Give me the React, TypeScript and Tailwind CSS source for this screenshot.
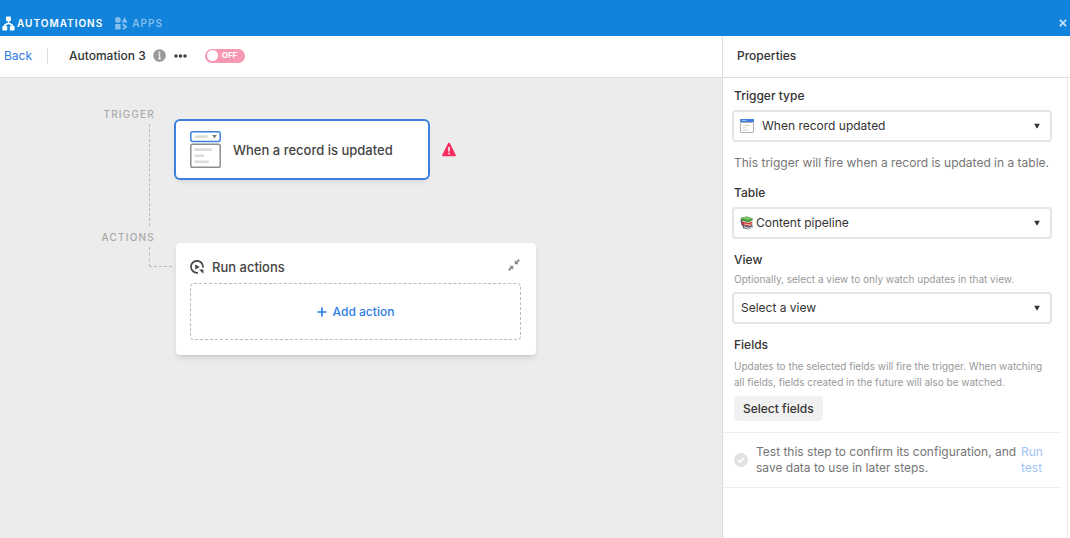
import type { ReactNode } from "react";

function AutomationsIcon() {
  return (
    <svg width="13" height="15" viewBox="0 0 13 15" fill="none" aria-hidden="true">
      <rect x="4" y="0.5" width="5" height="4.5" rx="0.8" fill="#fff" />
      <path d="M6.5 4.5V7.5M2.7 11V9.2L6.5 7L10.3 9.2V11" stroke="#fff" strokeWidth="1.7" />
      <rect x="0.4" y="10" width="4.8" height="4.5" rx="0.8" fill="#fff" />
      <rect x="7.8" y="10" width="4.8" height="4.5" rx="0.8" fill="#fff" />
    </svg>
  );
}

function AppsIcon() {
  return (
    <svg width="13" height="13" viewBox="0 0 13 13" fill="currentColor" aria-hidden="true">
      <circle cx="2.9" cy="2.9" r="2.8" />
      <path d="M9.6 0.2L12.6 5.6H6.6Z" />
      <rect x="0.2" y="7" width="5.4" height="5.6" rx="0.6" />
      <path d="M7.8 7.2L11 9.7L7.8 12.3" fill="none" stroke="currentColor" strokeWidth="2" />
    </svg>
  );
}

function InfoIcon() {
  return (
    <svg width="13" height="13" viewBox="0 0 13 13" aria-hidden="true">
      <circle cx="6.5" cy="6.5" r="6.3" fill="#999" />
      <circle cx="6.4" cy="3.4" r="1" fill="#fff" />
      <path d="M5.2 5.7H6.7V9.6M5 9.7H8.2" fill="none" stroke="#fff" strokeWidth="1.1" />
    </svg>
  );
}

function RecordIcon() {
  return (
    <svg width="31" height="37" viewBox="0 0 31 37" fill="none" aria-hidden="true">
      <rect x="0.8" y="0.8" width="29.4" height="9.6" rx="1.8" fill="#fff" stroke="#3d80df" strokeWidth="1.5" />
      <path d="M6 5.6H16.5" stroke="#dcdcdc" strokeWidth="2.6" strokeLinecap="round" />
      <path d="M22.2 4H26.8L24.5 7.2Z" fill="#777" />
      <rect x="0.8" y="13.2" width="29.4" height="23" rx="1.8" fill="#fff" stroke="#8e8e8e" strokeWidth="1.5" />
      <path d="M5.2 18.6H20.8M5.2 24.7H13.2M5.2 30.8H18" stroke="#dcdcdc" strokeWidth="2.6" strokeLinecap="round" />
    </svg>
  );
}

function RecordIconSmall() {
  return (
    <svg width="14" height="14" viewBox="0 0 14 14" fill="none" aria-hidden="true">
      <rect x="0.5" y="3.5" width="13" height="10" rx="0.6" fill="#fff" stroke="#b0b0b0" />
      <rect width="14" height="3" rx="0.6" fill="#3d7fe0" />
      <path d="M2 1.4H6.5" stroke="#a9c8f5" />
      <path d="M2.5 6.5H10M2.5 8.8H6.5M2.5 11H9" stroke="#d5d5d5" />
    </svg>
  );
}

function BooksIcon() {
  return (
    <svg width="14" height="14" viewBox="0 0 14 14" aria-hidden="true">
      <path d="M0.4 4.4L2 3.8L3.2 10.4L1.8 9.8Z" fill="#5b4b8a" />
      <path d="M3 9L9 10.2L12.6 8.8V11.6L8.6 13.4L3 12.2Z" fill="#4f6076" />
      <path d="M4 10.4L9 11.8L12.6 10.6V11.4L8.8 12.9L4 11.6Z" fill="#e9e6e4" />
      <path d="M1.6 5.2L8 7L12.2 5.6V8.6L8 10.4L2.4 8.8Z" fill="#c9372f" />
      <path d="M4 7.4L8.4 8.6L12 7.2V7.8L8.4 9.4L4 8.2Z" fill="#f0d8d0" />
      <path d="M0.6 2L6.8 0.4L12.6 2.6V4.2L8 6.4L1.2 4.2Z" fill="#3f8f3c" />
      <path d="M0.6 2L6.8 0.4L12.6 2.6L8 4.4Z" fill="#74c267" />
    </svg>
  );
}

function WarningIcon() {
  return (
    <svg width="14" height="15" viewBox="0 0 14 15" role="img" aria-label="Incomplete step">
      <path d="M6.2 1C6.5 0.3 7.5 0.3 7.8 1L13.8 13C14.1 13.7 13.8 14.3 13 14.3H1C0.2 14.3 -0.1 13.7 0.2 13Z" fill="#f82b60" />
      <path d="M7 5V9.4" stroke="#fff" strokeWidth="1.6" />
      <rect x="6.2" y="10.8" width="1.6" height="1.6" fill="#fff" />
    </svg>
  );
}

function RunIcon() {
  return (
    <svg width="14" height="14" viewBox="0 0 14 14" fill="none" aria-hidden="true">
      <path d="M8 12.7A6 6 0 1 1 12.9 7.6" stroke="#444" strokeWidth="1.7" />
      <path d="M5.2 4.4L9.8 7L5.2 9.6Z" fill="#444" />
      <path d="M9 9.4H13.4V13.8Z" fill="#444" />
    </svg>
  );
}

function CollapseIcon() {
  return (
    <svg width="12" height="12" viewBox="0 0 12 12" fill="#8a8a8a" aria-hidden="true">
      <path d="M6.7 1.2V5.3H10.8L9.4 3.9L11.9 1.4L10.6 0.1L8.1 2.6Z" />
      <path d="M5.3 10.8V6.7H1.2L2.6 8.1L0.1 10.6L1.4 11.9L3.9 9.4Z" />
    </svg>
  );
}

function CheckIcon() {
  return (
    <svg width="14" height="14" viewBox="0 0 14 14" fill="none" aria-hidden="true">
      <circle cx="7" cy="7" r="7" fill="#e2e2e2" />
      <path d="M4 7.2L6.2 9.3L10 5" stroke="#fff" strokeWidth="1.8" />
    </svg>
  );
}

function Label({ htmlFor, children }: { htmlFor: string; children: ReactNode }) {
  return (
    <label htmlFor={htmlFor} className="block px-0.5 text-xs leading-5 font-medium text-[#333]">
      {children}
    </label>
  );
}

function SelectBox({ id, value, icon, pad }: { id: string; value: string; icon?: ReactNode; pad: string }) {
  return (
    <div className="relative mt-1">
      <select
        id={id}
        className={`block h-8 w-full appearance-none rounded border-2 border-[#e5e5e5] bg-white pr-8 text-xs text-[#333] ${pad}`}
      >
        <option>{value}</option>
      </select>
      {icon && <span className="pointer-events-none absolute top-[9px] left-2">{icon}</span>}
      <svg className="pointer-events-none absolute top-[13px] right-3" width="6" height="6" viewBox="0 0 6 6" aria-hidden="true">
        <path d="M0.2 0.8H5.8L3.4 5.2H2.6Z" fill="#333" />
      </svg>
    </div>
  );
}

function Canvas() {
  return (
    <main className="flex flex-1 bg-[#ececec]">
      {/* Step labels and connectors */}
      <div className="w-[176px] shrink-0 pt-7 text-right text-[10px] leading-4 font-medium tracking-[0.12em] text-[#aaa]">
        <div className="pr-[21px]">TRIGGER</div>
        <div className="mt-0.5 ml-[149px] h-[102px] border-l border-dashed border-[#bbb]" />
        <div className="mt-[3px] pr-[21px]">ACTIONS</div>
        <div className="mt-0.5 mr-1 ml-[149px] h-5 border-b border-l border-dashed border-[#bbb]" />
      </div>

      <div className="pt-[43px]">
        <div className="flex items-center gap-[14px]">
          <button className="flex h-[57px] w-[252px] items-center gap-3 rounded-sm bg-white pl-[14px] text-[13px] font-medium text-[#444] shadow-md ring-2 ring-[#3d80df]">
            <RecordIcon />
            <span className="pt-0.5">When a record is updated</span>
          </button>
          <WarningIcon />
        </div>

        <section className="mt-[65px] h-28 w-[360px] rounded-sm bg-white pt-[14px] pr-[15px] pl-[14px] shadow-md">
          <div className="flex h-5 items-center gap-2">
            <RunIcon />
            <h2 className="flex-1 pt-0.5 text-[13px] font-medium text-[#444]">Run actions</h2>
            <button aria-label="Collapse" className="pr-px pb-1">
              <CollapseIcon />
            </button>
          </div>
          <button className="mt-[6px] flex h-[57px] w-full items-center justify-center gap-[6px] rounded-sm border border-dashed border-[#bbb] text-xs font-medium text-[#2d7be5]">
            <svg width="10" height="10" viewBox="0 0 10 10" stroke="currentColor" strokeWidth="1.7" aria-hidden="true">
              <path d="M5 0.5V9.5M0.5 5H9.5" />
            </svg>
            Add action
          </button>
        </section>
      </div>
    </main>
  );
}

function Properties() {
  return (
    <aside className="flex w-[348px] shrink-0 flex-col border-l border-[#ddd] bg-white">
      <h2 className="flex h-[42px] shrink-0 items-center border-b border-[#ddd] px-[14px] pb-0.5 text-xs font-medium text-[#333]">
        Properties
      </h2>
      <div className="mr-0.5 flex-1 border-r border-[#e5e5e5] pr-[6px]">
        <div className="px-[9px] pt-2 pb-[11px]">
          <Label htmlFor="trigger">Trigger type</Label>
          <SelectBox id="trigger" value="When record updated" icon={<RecordIconSmall />} pad="pl-7" />
          <p className="mt-[11px] px-0.5 text-xs leading-5 whitespace-nowrap text-[#757575]">
            This trigger will fire when a record is updated in a table.
          </p>

          <div className="mt-[10px]">
            <Label htmlFor="table">Table</Label>
            <SelectBox id="table" value="Content pipeline" icon={<BooksIcon />} pad="pl-[22px]" />
          </div>

          <div className="mt-[11px]">
            <Label htmlFor="view">View</Label>
            <p className="px-0.5 text-[10px] leading-[18px] text-[#999]">
              Optionally, select a view to only watch updates in that view.
            </p>
            <SelectBox id="view" value="Select a view" pad="pl-[7px]" />
          </div>

          <div className="mt-[11px]">
            <Label htmlFor="fields">Fields</Label>
            <p className="mt-[3px] px-0.5 text-[10px] leading-4 text-[#999]">
              Updates to the selected fields will fire the trigger. When watching
              <br />
              all fields, fields created in the future will also be watched.
            </p>
            <button id="fields" className="mt-[6px] ml-0.5 block h-[25px] rounded-sm bg-[#f1f1f1] px-[9px] text-xs font-medium text-[#333]">
              Select fields
            </button>
          </div>
        </div>

        <div className="flex items-center border-y border-[#eee] py-[11px] pl-[11px] text-xs leading-4">
          <CheckIcon />
          <p className="ml-2 flex-1 whitespace-nowrap text-[#757575]">
            Test this step to confirm its configuration, and
            <br />
            save data to use in later steps.
          </p>
          <button className="w-10 pr-3 text-left text-[#a0c4f8]">Run test</button>
        </div>
      </div>
    </aside>
  );
}

export default function App() {
  return (
    <div className="flex min-h-screen flex-col bg-white font-['Inter','Liberation_Sans',sans-serif]">
      <header className="flex h-9 items-center bg-[#1283da] pt-[10px] pr-[3px] pl-0.5 text-[10px] font-semibold tracking-widest text-white">
        <a href="#automations" className="flex items-center gap-0.5">
          <AutomationsIcon />
          AUTOMATIONS
        </a>
        <a href="#apps" className="ml-3 flex items-center gap-1 text-[#86bfee]">
          <AppsIcon />
          APPS
        </a>
        <button aria-label="Close" className="ml-auto text-[#c4e0f7]">
          <svg width="8" height="8" viewBox="0 0 8 8" stroke="currentColor" strokeWidth="1.8" aria-hidden="true">
            <path d="M0.8 0.8L7.2 7.2M7.2 0.8L0.8 7.2" />
          </svg>
        </button>
      </header>

      <div className="flex flex-1">
        <div className="flex flex-1 flex-col">
          <div className="flex h-[42px] items-center border-b border-[#ddd] pb-0.5 pl-1 text-xs text-[#333]">
            <a href="#back" className="w-11 border-r border-[#ddd] text-[#2d7be5]">
              Back
            </a>
            <h1 className="ml-[21px] font-medium">Automation 3</h1>
            <button aria-label="Info" className="ml-[7px]">
              <InfoIcon />
            </button>
            <button aria-label="More options" className="ml-2">
              <svg width="13" height="4" viewBox="0 0 13 4" fill="#444" aria-hidden="true">
                <circle cx="2" cy="2" r="1.8" />
                <circle cx="6.5" cy="2" r="1.8" />
                <circle cx="11" cy="2" r="1.8" />
              </svg>
            </button>
            <button
              role="switch"
              aria-checked="false"
              className="ml-[18px] flex h-[14px] w-10 items-center gap-1 rounded-full bg-[#f899b3] pl-0.5 text-[8px] font-bold text-white"
            >
              <span className="size-[11px] rounded-full bg-white" />
              OFF
            </button>
          </div>
          <Canvas />
        </div>
        <Properties />
      </div>
    </div>
  );
}
